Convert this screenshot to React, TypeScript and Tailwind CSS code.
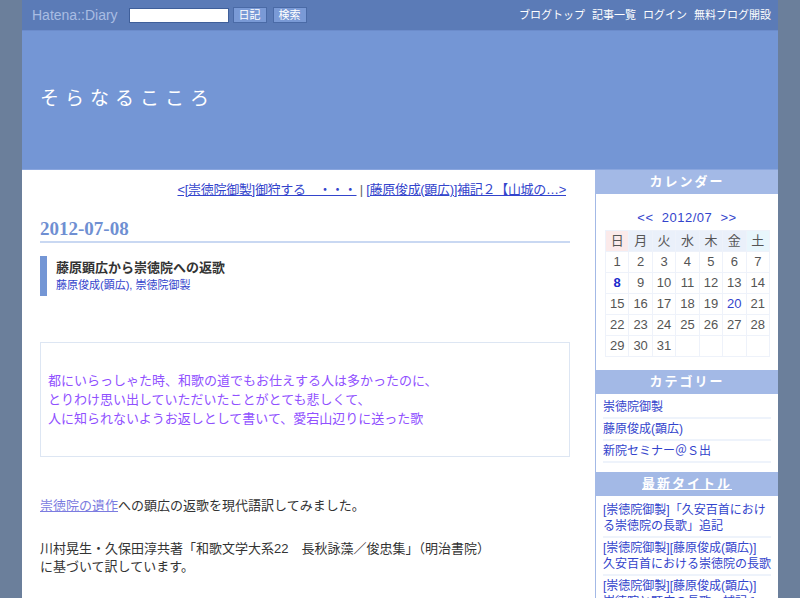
const jp = { fontFamily: '"Liberation Sans", "Noto Sans CJK JP", sans-serif' };

const days = ['日', '月', '火', '水', '木', '金', '土'];
const weeks: (number | null)[][] = [
  [1, 2, 3, 4, 5, 6, 7],
  [8, 9, 10, 11, 12, 13, 14],
  [15, 16, 17, 18, 19, 20, 21],
  [22, 23, 24, 25, 26, 27, 28],
  [29, 30, 31, null, null, null, null],
];

function SideHeader({ children }: { children: React.ReactNode }) {
  return (
    <div className="h-[24px] bg-[#a3b9e6] text-white text-[13px] font-bold tracking-[2px] flex items-center justify-center">
      {children}
    </div>
  );
}

export default function App() {
  return (
    <div className="min-h-[598px] bg-[#6b7f9b] text-[#333]" style={jp}>
      <div className="mx-auto w-[756px] bg-white">
        {/* top bar */}
        <div className="h-[30px] bg-[#5b7bb7] flex items-center px-[10px]">
          <span className="text-[14px] text-[#a9bde3] mr-[11px]" style={{ fontFamily: '"Liberation Sans", sans-serif' }}>Hatena::Diary</span>
          <input className="w-[100px] h-[15px] bg-white border border-[#3f5f9a] mr-[4px]" />
          <button className="h-[16px] px-[5px] text-[11px] leading-none text-white bg-[#7a9ad6] border border-[#4a6aa6] mr-[6px]">日記</button>
          <button className="h-[16px] px-[5px] text-[11px] leading-none text-white bg-[#7a9ad6] border border-[#4a6aa6]">検索</button>
          <div className="ml-auto flex gap-[7px] text-[11px] text-white mr-[-3px]">
            <span>ブログトップ</span>
            <span>記事一覧</span>
            <span>ログイン</span>
            <span>無料ブログ開設</span>
          </div>
        </div>
        {/* header */}
        <div className="h-[139px] bg-[#7496d5] border-t border-[#6c8ccb] flex items-center pl-[18px]">
          <h1 className="text-[19px] text-white tracking-[6px] pb-[2px]">そらなるこころ</h1>
        </div>
        <div className="flex border-t border-[#8aa6de]">
          {/* main */}
          <div className="w-[573px] pl-[18px] pr-[25px] pt-[10px] pb-[20px]">
            <div className="text-right text-[13px] mr-[4px] tracking-[-0.3px]">
              <a className="text-[#3344cc] underline">&lt;[崇徳院御製]御狩する　・・・</a>
              <span className="text-[#666]"> | </span>
              <a className="text-[#3344cc] underline">[藤原俊成(顕広)]補記２【山城の…&gt;</a>
            </div>
            <div className="mt-[17px] border-b-2 border-[#c9d8f2]">
              <h2 className="text-[19px] leading-[24px] font-bold text-[#6f8fd2]" style={{ fontFamily: '"Liberation Serif", serif' }}>2012-07-08</h2>
            </div>
            <div className="mt-[13px] border-l-[7px] border-[#7496d5] pl-[9px] py-[3px]">
              <h3 className="text-[13px] font-bold text-[#333] leading-[18px]">藤原顕広から崇徳院への返歌</h3>
              <div className="text-[11px] text-[#3344cc] leading-[16px]">藤原俊成(顕広), 崇徳院御製</div>
            </div>
            <div className="mt-[46px] border border-[#dde6f3] h-[115px] pl-[7px] flex flex-col justify-center text-[13px] leading-[19px] text-[#9050ff]">
              <p>都にいらっしゃた時、和歌の道でもお仕えする人は多かったのに、</p>
              <p>とりわけ思い出していただいたことがとても悲しくて、</p>
              <p>人に知られないようお返しとして書いて、愛宕山辺りに送った歌</p>
            </div>
            <div className="mt-[39px] text-[13px] leading-[19px] text-[#333]">
              <p><a className="text-[#7b7be0] underline">崇徳院の遺作</a>への顕広の返歌を現代語訳してみました。</p>
              <p className="mt-[24px]">川村晃生・久保田淳共著「和歌文学大系22　長秋詠藻／俊忠集」（明治書院）</p>
              <p className="-mt-[1px]">に基づいて訳しています。</p>
            </div>
          </div>
          {/* sidebar */}
          <div className="w-[183px] border-l border-[#a3b9e6]">
            <SideHeader>カレンダー</SideHeader>
            <div className="pt-[14px] pb-[13px] px-[9px]">
              <div className="text-center text-[13px] text-[#3344cc] tracking-[0.5px] mb-[2px]">
                &lt;&lt;&nbsp;&nbsp;2012/07&nbsp;&nbsp;&gt;&gt;
              </div>
              <table className="w-[165px] border-collapse text-[13px] text-[#555]">
                <thead>
                  <tr>
                    {days.map((d, i) => (
                      <th
                        key={d}
                        className={`h-[21px] font-normal border border-[#eef2fa] ${i === 0 ? 'bg-[#fbeaea]' : i === 6 ? 'bg-[#e8f6fc]' : 'bg-[#eaf0fa]'}`}
                      >
                        {d}
                      </th>
                    ))}
                  </tr>
                </thead>
                <tbody>
                  {weeks.map((w, wi) => (
                    <tr key={wi}>
                      {w.map((n, i) => (
                        <td
                          key={i}
                          className={`h-[21px] text-center border border-[#eef2fa] ${n === 8 ? 'font-bold text-[#1a2acc]' : n === 20 ? 'text-[#3344cc]' : ''}`}
                        >
                          {n ?? ''}
                        </td>
                      ))}
                    </tr>
                  ))}
                </tbody>
              </table>
            </div>
            <SideHeader>カテゴリー</SideHeader>
            <ul className="px-[7px] pt-[3px] pb-[9px] text-[12px] text-[#3344cc]">
              {['崇徳院御製', '藤原俊成(顕広)', '新院セミナー＠Ｓ出'].map((c) => (
                <li key={c} className="h-[22px] flex items-center border-b-2 border-[#eef3fb]">{c}</li>
              ))}
            </ul>
            <SideHeader><span className="underline">最新タイトル</span></SideHeader>
            <ul className="px-[7px] pt-[6px] text-[12px] leading-[16px] text-[#3344cc]">
              <li className="pb-[2px] border-b-2 border-[#eef3fb]">[崇徳院御製]「久安百首におけ<br />る崇徳院の長歌」追記</li>
              <li className="py-[2px] border-b-2 border-[#eef3fb]">[崇徳院御製][藤原俊成(顕広)]<br />久安百首における崇徳院の長歌</li>
              <li className="py-[2px]">[崇徳院御製][藤原俊成(顕広)]<br />崇徳院と顕広の長歌　補記１</li>
            </ul>
          </div>
        </div>
      </div>
    </div>
  );
}
